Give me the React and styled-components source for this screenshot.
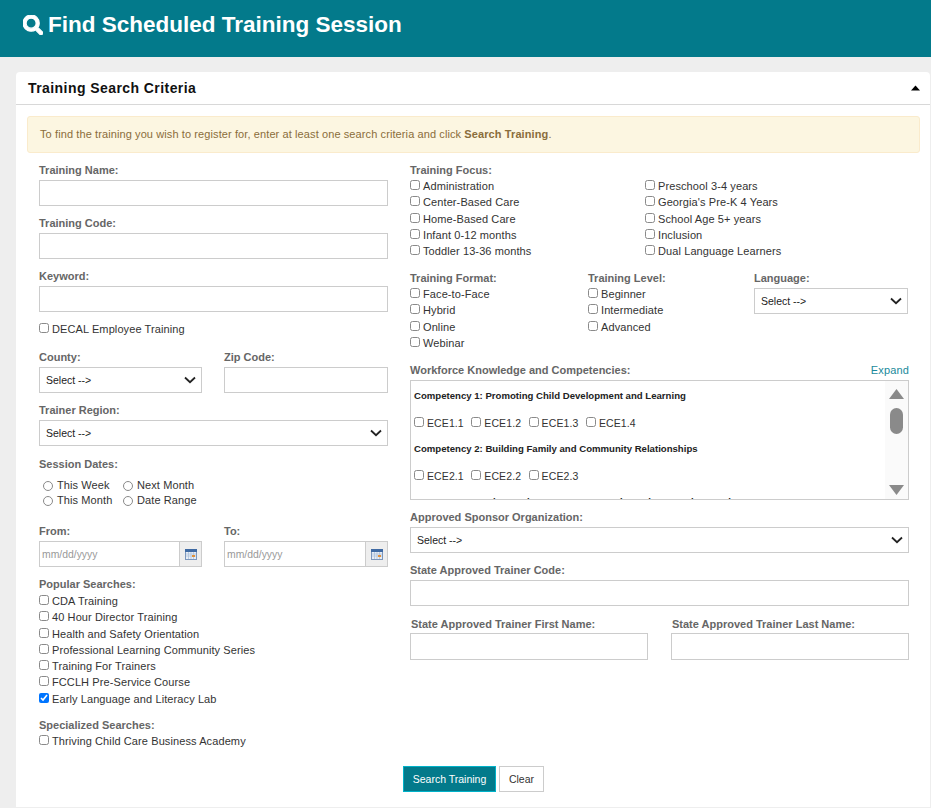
import React from "react";
import styled, { createGlobalStyle } from "styled-components";
import { FaSearch } from "react-icons/fa";

const GlobalStyle = createGlobalStyle`
  html, body {
    margin: 0;
    padding: 0;
    height: 808px;
    overflow: hidden;
    background: #eeeeee;
    font-family: "Liberation Sans", Arial, sans-serif;
  }
  * { box-sizing: border-box; }
`;

const teal = "#037a8b";

const Banner = styled.header`
  height: 57px;
  background: ${teal};
  color: #fff;
  display: flex;
  align-items: center;
  gap: 5px;
  padding: 0 0 8px 23px;
`;
const BannerTitle = styled.h1`
  margin: 0;
  font-size: 22.5px;
  font-weight: 700;
  line-height: 30px;
`;
const Panel = styled.section`
  margin: 15px 1px 0 16px;
  height: 735px;
  background: #fff;
  border-radius: 4px 4px 0 0;
`;
const PanelHead = styled.div`
  height: 33px;
  border-bottom: 1px solid #d8d8d8;
  display: flex;
  align-items: center;
  justify-content: space-between;
  padding: 0 10px 0 12px;
`;
const PanelTitle = styled.h2`
  margin: 0;
  font-size: 14px;
  font-weight: 700;
  color: #111;
  letter-spacing: 0.43px;
`;
const PanelBody = styled.div`
  padding: 11px 10px 0 11px;
`;
const Alert = styled.p`
  margin: 0;
  height: 37px;
  padding: 0 12px 2px;
  display: flex;
  align-items: center;
  white-space: pre;
  background: #fcf6e1;
  border: 1px solid #faebcc;
  border-radius: 3px;
  color: #8a6d3b;
  font-size: 11px;
  letter-spacing: 0.1px;
`;
const Columns = styled.div`
  display: grid;
  grid-template-columns: 349px 499px;
  column-gap: 22px;
  padding: 8px 0 0 12px;
`;
const Column = styled.div`
  display: flex;
  flex-direction: column;
`;
const Label = styled.label`
  display: block;
  font-size: 11px;
  font-weight: 700;
  line-height: 18px;
  color: #666;
  margin-left: ${(p) => p.$indent || 0}px;
`;
const Field = styled.div`
  margin-bottom: ${(p) => (p.$gap === undefined ? 8 : p.$gap)}px;
  min-width: 0;
`;
const TextInput = styled.input`
  display: block;
  width: 100%;
  height: ${(p) => p.$h || 26}px;
  margin-top: ${(p) => (p.$flush ? 0 : 1)}px;
  border: 1px solid #ccc;
  background: #fff;
  padding: 0 6px;
  outline: none;
`;
const SelectWrap = styled.div`
  position: relative;
  height: 26px;
  margin-top: 1px;
`;
const NativeSelect = styled.select`
  appearance: none;
  width: 100%;
  height: 100%;
  border: 1px solid #ccc;
  background: #fff;
  padding: 0 6px;
  font-family: inherit;
  font-size: 10.5px;
  color: #222;
  outline: none;
`;
const Chevron = styled.svg`
  position: absolute;
  right: 6px;
  top: 9px;
  width: 12px;
  height: 8px;
  pointer-events: none;
`;
const Row = styled.div`
  display: grid;
  grid-template-columns: ${(p) => p.$cols};
  column-gap: ${(p) => p.$gap || 0}px;
  margin-top: ${(p) => p.$mt || 0}px;
`;
const CheckGroup = styled.div`
  margin-top: ${(p) => p.$mt || 0}px;
  margin-bottom: ${(p) => p.$mb || 0}px;
`;
const CheckRow = styled.label`
  display: flex;
  align-items: center;
  gap: 3px;
  height: ${(p) => p.$h || 16.3}px;
  font-size: ${(p) => p.$size || 11}px;
  letter-spacing: 0.1px;
  color: #333;
  white-space: nowrap;
`;
const Box = styled.input`
  width: 10px;
  height: 10px;
  margin: 0 0 2px;
  flex: none;
  accent-color: #0075ff;
  &:not(:checked) { opacity: 0.85; }
`;
const RadioGrid = styled.div`
  display: grid;
  grid-template-columns: 80px auto;
  justify-content: start;
  padding: 4.5px 0 0 4px;
  margin-bottom: 14.5px;
`;
const RadioLabel = styled.label`
  display: flex;
  align-items: center;
  gap: 4px;
  height: 15px;
  font-size: 11px;
  letter-spacing: 0.1px;
  color: #333;
`;
const Radio = styled.input`
  width: 10px;
  height: 10px;
  margin: 2px 0 0;
  flex: none;
  opacity: 0.85;
`;
const DateGroup = styled.div`
  display: flex;
  height: 26px;
  margin-top: 1px;
  border: 1px solid #ccc;
`;
const DateInput = styled.input`
  flex: 1;
  min-width: 0;
  border: 0;
  padding: 0 2px;
  font-family: inherit;
  font-size: 10.4px;
  outline: none;
  &::placeholder { color: #999; }
`;
const DateAddon = styled.span`
  width: 22px;
  background: #eee;
  border-left: 1px solid #ccc;
  display: flex;
  align-items: center;
  justify-content: center;
`;
const LinkedHead = styled.div`
  display: flex;
  justify-content: space-between;
  align-items: center;
`;
const ExpandLink = styled.a`
  font-size: 11px;
  letter-spacing: 0.15px;
  line-height: 18px;
  color: #1a8a9b;
`;
const ScrollBox = styled.div`
  display: flex;
  height: 120px;
  margin-top: 1px;
  border: 1px solid #ccc;
  overflow: hidden;
`;
const ScrollContent = styled.div`
  flex: 1;
  min-width: 0;
  padding: 0 3px;
  overflow: hidden;
`;
const CompetencyTitle = styled.div`
  font-size: 9.6px;
  font-weight: 700;
  line-height: 12px;
  color: #222;
  margin: 9px 0 14.5px;
  white-space: nowrap;
`;
const CompetencyItems = styled.div`
  display: flex;
  gap: 7.5px;
  margin-bottom: 12.5px;
`;
const ScrollTrack = styled.div`
  width: 23px;
  background: #fafafa;
  display: flex;
  flex-direction: column;
  align-items: center;
  padding-top: 8px;
`;
const ScrollThumb = styled.div`
  width: 13px;
  height: 26px;
  margin-top: 9px;
  border-radius: 7px;
  background: #8a8a8a;
`;
const DownArrow = styled.svg`
  margin-top: 51px;
`;
const Actions = styled.div`
  display: flex;
  justify-content: center;
  gap: 3px;
  margin-top: 17px;
`;
const PrimaryButton = styled.button`
  height: 26px;
  width: 93px;
  padding: 0;
  background: ${teal};
  border: 1px solid #00b2c9;
  color: #fff;
  font-family: inherit;
  font-size: 10.5px;
`;
const DefaultButton = styled.button`
  height: 26px;
  width: 45px;
  padding: 0;
  background: #fff;
  border: 1px solid #ccc;
  color: #333;
  font-family: inherit;
  font-size: 10.5px;
`;

const Select = () => (
  <SelectWrap>
    <NativeSelect defaultValue="">
      <option value="">{"Select -->"}</option>
    </NativeSelect>
    <Chevron viewBox="0 0 12 8">
      <path d="M1 1.5 6 6.2 11 1.5" fill="none" stroke="#222" strokeWidth="1.8" />
    </Chevron>
  </SelectWrap>
);

const Check = ({ label, checked, h, size }) => (
  <CheckRow $h={h} $size={size}>
    <Box type="checkbox" defaultChecked={checked} />
    {label}
  </CheckRow>
);

const Calendar = () => (
  <svg width="12" height="11" viewBox="0 0 12 11">
    <rect x="0.5" y="0.5" width="11" height="10" fill="#e8eef6" stroke="#7c97bd" />
    <rect x="0" y="0" width="12" height="3" fill="#3f6aa3" />
    <path d="M1 5h10M1 7h10M3.5 3v7M6 3v7M8.5 3v7" stroke="#a9bdd8" strokeWidth="0.7" />
    <rect x="7" y="6" width="3" height="2" fill="#e0913a" />
  </svg>
);

const DateField = ({ label }) => (
  <Field>
    <Label>{label}</Label>
    <DateGroup>
      <DateInput placeholder="mm/dd/yyyy" />
      <DateAddon>
        <Calendar />
      </DateAddon>
    </DateGroup>
  </Field>
);

const focusLeft = ["Administration", "Center-Based Care", "Home-Based Care", "Infant 0-12 months", "Toddler 13-36 months"];
const focusRight = ["Preschool 3-4 years", "Georgia's Pre-K 4 Years", "School Age 5+ years", "Inclusion", "Dual Language Learners"];
const popular = [
  "CDA Training",
  "40 Hour Director Training",
  "Health and Safety Orientation",
  "Professional Learning Community Series",
  "Training For Trainers",
  "FCCLH Pre-Service Course",
];

export default function App() {
  return (
    <>
      <GlobalStyle />
      <Banner>
        <FaSearch size={20} stroke="currentColor" strokeWidth={30} />
        <BannerTitle>Find Scheduled Training Session</BannerTitle>
      </Banner>
      <Panel>
        <PanelHead>
          <PanelTitle>Training Search Criteria</PanelTitle>
          <svg width="9" height="6" viewBox="0 0 9 6">
            <path d="M4.5 0.5 9 5.5H0Z" fill="#000" />
          </svg>
        </PanelHead>
        <PanelBody>
          <Alert>
            <span>
              To find the training you wish to register for, enter at least one search criteria and click{" "}
              <strong>Search Training</strong>.
            </span>
          </Alert>
          <Columns>
            <Column>
              <Field><Label>Training Name:</Label><TextInput /></Field>
              <Field><Label>Training Code:</Label><TextInput /></Field>
              <Field $gap={9}><Label>Keyword:</Label><TextInput /></Field>
              <Field $gap={11}><Check label="DECAL Employee Training" /></Field>
              <Row $cols="163px 164px" $gap={22}>
                <Field><Label>County:</Label><Select /></Field>
                <Field><Label>Zip Code:</Label><TextInput /></Field>
              </Row>
              <Field $gap={9}><Label>Trainer Region:</Label><Select /></Field>
              <Label>Session Dates:</Label>
              <RadioGrid>
                <RadioLabel><Radio type="radio" name="d" />This Week</RadioLabel>
                <RadioLabel><Radio type="radio" name="d" />Next Month</RadioLabel>
                <RadioLabel><Radio type="radio" name="d" />This Month</RadioLabel>
                <RadioLabel><Radio type="radio" name="d" />Date Range</RadioLabel>
              </RadioGrid>
              <Row $cols="163px 164px" $gap={22}>
                <DateField label="From:" />
                <DateField label="To:" />
              </Row>
              <Label>Popular Searches:</Label>
              <CheckGroup $mt={-0.5} $mb={9.5}>
                {popular.map((item) => <Check key={item} label={item} />)}
                <Check label="Early Language and Literacy Lab" checked />
              </CheckGroup>
              <Label>Specialized Searches:</Label>
              <CheckGroup $mt={-1.5}>
                <Check label="Thriving Child Care Business Academy" />
              </CheckGroup>
            </Column>
            <Column>
              <Label>Training Focus:</Label>
              <Row $cols="235px 1fr">
                <CheckGroup $mt={-1}>{focusLeft.map((item) => <Check key={item} label={item} />)}</CheckGroup>
                <CheckGroup $mt={-1}>{focusRight.map((item) => <Check key={item} label={item} />)}</CheckGroup>
              </Row>
              <Row $cols="178px 166px 154px" $mt={10}>
                <div>
                  <Label>Training Format:</Label>
                  <CheckGroup $mt={-1.5}>
                    {["Face-to-Face", "Hybrid", "Online", "Webinar"].map((item) => <Check key={item} label={item} />)}
                  </CheckGroup>
                </div>
                <div>
                  <Label>Training Level:</Label>
                  <CheckGroup $mt={-1.5}>
                    {["Beginner", "Intermediate", "Advanced"].map((item) => <Check key={item} label={item} />)}
                  </CheckGroup>
                </div>
                <div>
                  <Label>Language:</Label>
                  <Select />
                </div>
              </Row>
              <Row $cols="1fr" $mt={9.5}>
                <Field>
                  <LinkedHead>
                    <Label>Workforce Knowledge and Competencies:</Label>
                    <ExpandLink>Expand</ExpandLink>
                  </LinkedHead>
                  <ScrollBox>
                    <ScrollContent>
                      <CompetencyTitle>Competency 1: Promoting Child Development and Learning</CompetencyTitle>
                      <CompetencyItems>
                        {["ECE1.1", "ECE1.2", "ECE1.3", "ECE1.4"].map((item) => <Check key={item} label={item} h={14} size={10.5} />)}
                      </CompetencyItems>
                      <CompetencyTitle>Competency 2: Building Family and Community Relationships</CompetencyTitle>
                      <CompetencyItems>
                        {["ECE2.1", "ECE2.2", "ECE2.3"].map((item) => <Check key={item} label={item} h={14} size={10.5} />)}
                      </CompetencyItems>
                      <CompetencyTitle>Competency 3: Observation, Assessment and Developmental Screening</CompetencyTitle>
                    </ScrollContent>
                    <ScrollTrack>
                      <svg width="15" height="10" viewBox="0 0 15 10">
                        <path d="M7.5 0 15 10H0Z" fill="#8a8a8a" />
                      </svg>
                      <ScrollThumb />
                      <DownArrow width="15" height="10" viewBox="0 0 15 10">
                        <path d="M7.5 10 15 0H0Z" fill="#8a8a8a" />
                      </DownArrow>
                    </ScrollTrack>
                  </ScrollBox>
                </Field>
              </Row>
              <Field><Label>Approved Sponsor Organization:</Label><Select /></Field>
              <Field $gap={9}><Label>State Approved Trainer Code:</Label><TextInput /></Field>
              <Row $cols="238px 238px" $gap={23}>
                <Field><Label $indent={1}>State Approved Trainer First Name:</Label><TextInput $flush $h={27} /></Field>
                <Field><Label $indent={1}>State Approved Trainer Last Name:</Label><TextInput $flush $h={27} /></Field>
              </Row>
            </Column>
          </Columns>
          <Actions>
            <PrimaryButton>Search Training</PrimaryButton>
            <DefaultButton>Clear</DefaultButton>
          </Actions>
        </PanelBody>
      </Panel>
    </>
  );
}
